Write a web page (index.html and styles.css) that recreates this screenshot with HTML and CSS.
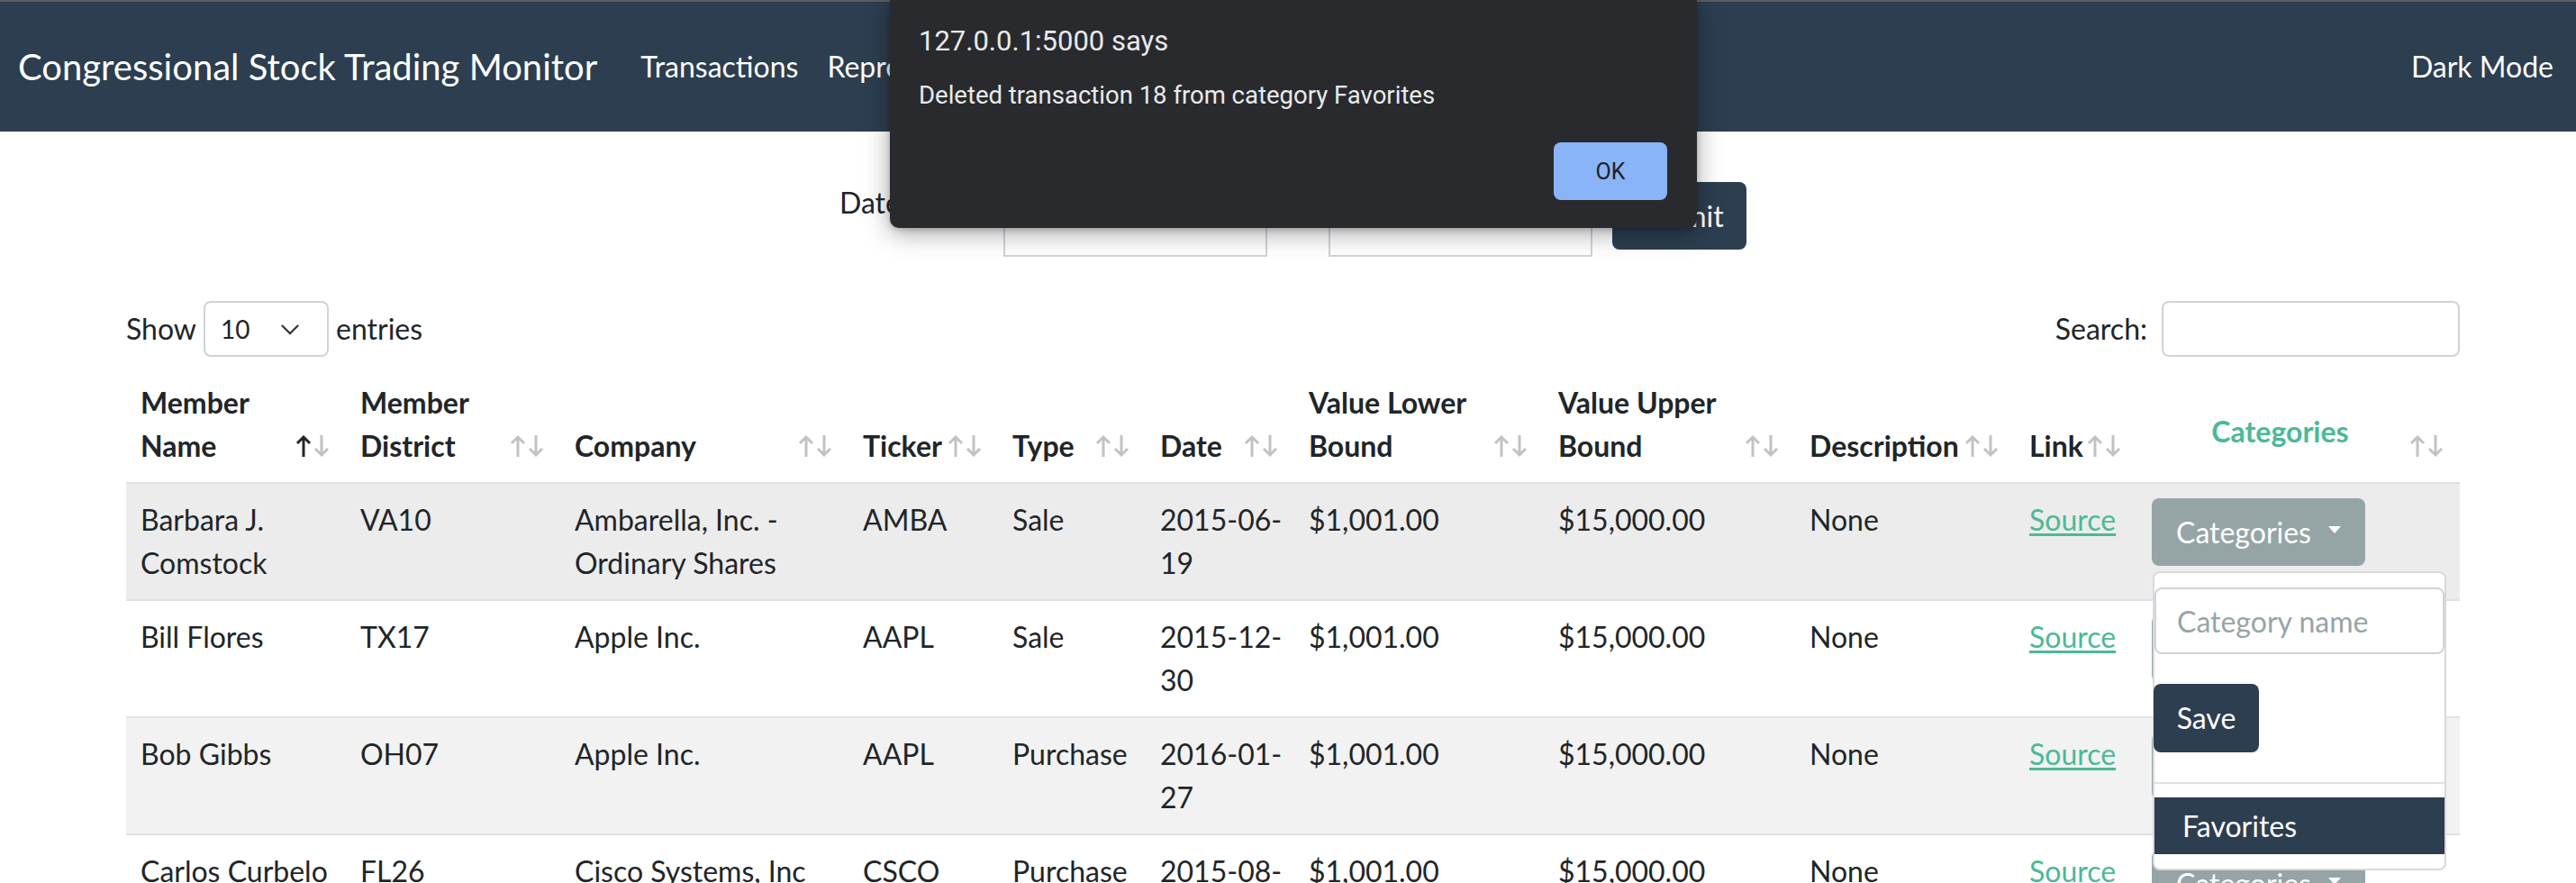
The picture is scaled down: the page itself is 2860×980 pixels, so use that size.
FILE: index.html
```html
<!DOCTYPE html>
<html lang="en">
<head>
<meta charset="utf-8">
<title>Congressional Stock Trading Monitor</title>
<link rel="stylesheet" href="styles.css">
</head>
<body>
<div class="topline"></div>
<nav class="navbar">
  <a class="brand" href="#">Congressional Stock Trading Monitor</a>
  <ul class="nav">
    <li><a href="#">Transactions</a></li>
    <li><a href="#">Representatives</a></li>
    <li><a href="#">Categories</a></li>
  </ul>
  <a class="nav-right" href="#">Dark Mode</a>
</nav>

<main class="container">
  <form class="date-form">
    <label class="lbl-from">Date from:</label>
    <input class="form-control" type="text">
    <label class="lbl-to">to:</label>
    <input class="form-control" type="text">
    <button type="button" class="btn btn-primary btn-submit">Submit</button>
  </form>

  <div class="dt-top">
    <label class="dt-length">Show
      <span class="dt-select">10
        <svg class="chev" viewBox="0 0 24 14" width="22" height="13"><path d="M2 2l10 10L22 2"/></svg>
      </span>
      entries</label>
    <label class="dt-search">Search: <input class="search-input" type="search"></label>
  </div>

  <table class="dt">
    <colgroup>
      <col class="w1"><col class="w2"><col class="w3"><col class="w4"><col class="w5"><col class="w6"><col class="w7"><col class="w8"><col class="w9"><col class="w10"><col class="w11">
    </colgroup>
    <thead>
      <tr>
        <th><div class="th-in"><span class="th-lbl">Member Name</span><span class="sort asc"><svg viewBox="0 0 40 26" width="40" height="26"><path class="up" d="M10 25V3M3 10l7-7 7 7"/><path class="dn" d="M30 1v22M23 16l7 7 7-7"/></svg></span></div></th>
        <th><div class="th-in"><span class="th-lbl">Member District</span><span class="sort"><svg viewBox="0 0 40 26" width="40" height="26"><path class="up" d="M10 25V3M3 10l7-7 7 7"/><path class="dn" d="M30 1v22M23 16l7 7 7-7"/></svg></span></div></th>
        <th><div class="th-in"><span class="th-lbl">Company</span><span class="sort"><svg viewBox="0 0 40 26" width="40" height="26"><path class="up" d="M10 25V3M3 10l7-7 7 7"/><path class="dn" d="M30 1v22M23 16l7 7 7-7"/></svg></span></div></th>
        <th><div class="th-in"><span class="th-lbl">Ticker</span><span class="sort"><svg viewBox="0 0 40 26" width="40" height="26"><path class="up" d="M10 25V3M3 10l7-7 7 7"/><path class="dn" d="M30 1v22M23 16l7 7 7-7"/></svg></span></div></th>
        <th><div class="th-in"><span class="th-lbl">Type</span><span class="sort"><svg viewBox="0 0 40 26" width="40" height="26"><path class="up" d="M10 25V3M3 10l7-7 7 7"/><path class="dn" d="M30 1v22M23 16l7 7 7-7"/></svg></span></div></th>
        <th><div class="th-in"><span class="th-lbl">Date</span><span class="sort"><svg viewBox="0 0 40 26" width="40" height="26"><path class="up" d="M10 25V3M3 10l7-7 7 7"/><path class="dn" d="M30 1v22M23 16l7 7 7-7"/></svg></span></div></th>
        <th><div class="th-in"><span class="th-lbl">Value Lower Bound</span><span class="sort"><svg viewBox="0 0 40 26" width="40" height="26"><path class="up" d="M10 25V3M3 10l7-7 7 7"/><path class="dn" d="M30 1v22M23 16l7 7 7-7"/></svg></span></div></th>
        <th><div class="th-in"><span class="th-lbl">Value Upper Bound</span><span class="sort"><svg viewBox="0 0 40 26" width="40" height="26"><path class="up" d="M10 25V3M3 10l7-7 7 7"/><path class="dn" d="M30 1v22M23 16l7 7 7-7"/></svg></span></div></th>
        <th><div class="th-in"><span class="th-lbl">Description</span><span class="sort"><svg viewBox="0 0 40 26" width="40" height="26"><path class="up" d="M10 25V3M3 10l7-7 7 7"/><path class="dn" d="M30 1v22M23 16l7 7 7-7"/></svg></span></div></th>
        <th><div class="th-in"><span class="th-lbl">Link</span><span class="sort"><svg viewBox="0 0 40 26" width="40" height="26"><path class="up" d="M10 25V3M3 10l7-7 7 7"/><path class="dn" d="M30 1v22M23 16l7 7 7-7"/></svg></span></div></th>
        <th><div class="th-in th-cat"><span class="th-lbl cat-lbl">Categories</span><span class="sort"><svg viewBox="0 0 40 26" width="40" height="26"><path class="up" d="M10 25V3M3 10l7-7 7 7"/><path class="dn" d="M30 1v22M23 16l7 7 7-7"/></svg></span></div></th>
      </tr>
    </thead>
    <tbody>
      <tr class="hover">
        <td>Barbara J. Comstock</td><td>VA10</td><td>Ambarella, Inc. - Ordinary Shares</td><td>AMBA</td><td>Sale</td><td><span class="nw">2015-06-</span><wbr><span class="nw">19</span></td><td>$1,001.00</td><td>$15,000.00</td><td>None</td><td><a class="link" href="#">Source</a></td>
        <td>
          <div class="dd">
            <button type="button" class="btn btn-cat">Categories<span class="caret"></span></button>
            <div class="menu">
              <form class="cat-form">
                <input class="cat-input" type="text" placeholder="Category name">
                <button type="button" class="btn btn-primary btn-save">Save</button>
              </form>
              <div class="divider"></div>
              <a class="menu-item active" href="#">Favorites</a>
            </div>
          </div>
        </td>
      </tr>
      <tr>
        <td>Bill Flores</td><td>TX17</td><td>Apple Inc.</td><td>AAPL</td><td>Sale</td><td><span class="nw">2015-12-</span><wbr><span class="nw">30</span></td><td>$1,001.00</td><td>$15,000.00</td><td>None</td><td><a class="link" href="#">Source</a></td>
        <td><div class="dd"><button type="button" class="btn btn-cat">Categories<span class="caret"></span></button></div></td>
      </tr>
      <tr>
        <td>Bob Gibbs</td><td>OH07</td><td>Apple Inc.</td><td>AAPL</td><td>Purchase</td><td><span class="nw">2016-01-</span><wbr><span class="nw">27</span></td><td>$1,001.00</td><td>$15,000.00</td><td>None</td><td><a class="link" href="#">Source</a></td>
        <td><div class="dd"><button type="button" class="btn btn-cat">Categories<span class="caret"></span></button></div></td>
      </tr>
      <tr>
        <td>Carlos Curbelo</td><td>FL26</td><td>Cisco Systems, Inc</td><td>CSCO</td><td>Purchase</td><td><span class="nw">2015-08-</span><wbr><span class="nw">20</span></td><td>$1,001.00</td><td>$15,000.00</td><td>None</td><td><a class="link" href="#">Source</a></td>
        <td><div class="dd"><button type="button" class="btn btn-cat">Categories<span class="caret"></span></button></div></td>
      </tr>
    </tbody>
  </table>
</main>

<div class="dialog" role="alertdialog">
  <div class="dlg-title">127.0.0.1:5000 says</div>
  <div class="dlg-msg">Deleted transaction 18 from category Favorites</div>
  <div class="dlg-actions"><button type="button" class="dlg-ok">OK</button></div>
</div>
</body>
</html>
```

FILE: styles.css
```css
* { box-sizing: border-box; }

html, body { margin: 0; padding: 0; }

body {
  position: relative;
  width: 2860px;
  height: 980px;
  overflow: hidden;
  background: #fff;
  color: #212529;
  font-family: Lato, "Liberation Sans", sans-serif;
  font-size: 32px;
  line-height: 48px;
}

a { text-decoration: none; color: inherit; }

.nw { white-space: nowrap; }

.topline { height: 2px; background: #5c5d60; }

/* navbar */
.navbar {
  height: 144px;
  background: #2c3e50;
  color: #fff;
  display: flex;
  align-items: center;
  padding: 0 25px 0 20px;
}
.brand { font-size: 40px; line-height: 48px; margin-right: 32px; white-space: nowrap; }
.nav { display: flex; list-style: none; margin: 0; padding: 0; flex: 1; }
.nav li a { display: block; padding: 0 16px; white-space: nowrap; }
.nav-right { display: block; }

/* main */
.container { width: 2591px; margin-left: 140px; }

.date-form {
  display: flex;
  justify-content: center;
  align-items: flex-start;
  padding-top: 55px;
  height: 139px;
}
.lbl-from { width: 182px; }
.lbl-to { width: 68px; text-align: center; margin-top: 0; }
.form-control {
  width: 293px;
  height: 76px;
  margin-top: 8px;
  border: 2px solid #ced4da;
  border-radius: 0;
  font: inherit;
  padding: 0 22px;
}
.btn {
  font: inherit;
  border: 0;
  border-radius: 8px;
  color: #fff;
  cursor: pointer;
}
.btn-primary { background: #2c3e50; }
.btn-submit { margin-left: 22px; margin-top: 1px; width: 149px; height: 75px; padding: 0; }

/* datatable top */
.dt-top {
  display: flex;
  justify-content: space-between;
  align-items: center;
  margin-top: 49px;
  height: 62px;
}
.dt-length, .dt-search { display: flex; align-items: center; }
.dt-select {
  display: flex;
  align-items: center;
  justify-content: space-between;
  width: 139px;
  height: 62px;
  margin: 0 8px;
  padding: 0 30px 0 17px;
  border: 2px solid #ced4da;
  border-radius: 8px;
  font-size: 28px;
}
.chev { fill: none; stroke: #343a40; stroke-width: 2.4; }
.search-input {
  width: 331px;
  height: 62px;
  margin-left: 16px;
  border: 2px solid #ced4da;
  border-radius: 8px;
  font: inherit;
}

/* table */
.dt {
  margin-top: 11px;
  width: 2591px;
  table-layout: fixed;
  border-collapse: collapse;
}
.w1 { width: 244px; } .w2 { width: 238px; } .w3 { width: 320px; } .w4 { width: 166px; }
.w5 { width: 164px; } .w6 { width: 165px; } .w7 { width: 277px; } .w8 { width: 279px; }
.w9 { width: 244px; } .w10 { width: 136px; } .w11 { width: 358px; }

.dt th, .dt td {
  padding: 16px;
  border-bottom: 2px solid #dee2e6;
  text-align: left;
}
.dt th { vertical-align: bottom; font-weight: 700; }
.dt td { vertical-align: top; }

.th-in { display: flex; align-items: flex-end; }
.th-lbl { flex: 0 1 auto; min-width: 0; }
.sort { margin-left: auto; margin-right: 1px; margin-bottom: 11px; flex: none; display: flex; }
.sort svg { display: block; }
.sort path { fill: none; stroke: #c2c2c2; stroke-width: 3; stroke-linecap: butt; }
.sort.asc .up { stroke: #212529; }

.th-cat { height: 96px; }
.cat-lbl { flex: 1; text-align: center; color: #4bb996; margin-bottom: 16px; }

.dt tbody tr:nth-child(odd) td { background: #f2f2f2; }
.dt tbody tr.hover td { background: #ececec; }

.link { color: #4bb996; text-decoration: underline; text-underline-offset: 3px; }

/* categories dropdown */
.dd { position: relative; display: inline-block; }
.btn-cat {
  display: flex;
  align-items: center;
  height: 75px;
  padding: 0 27px;
  background: #95a5a6;
}
.caret {
  margin-left: 19px;
  width: 0; height: 0;
  border-top: 8px solid #fff;
  border-left: 7.5px solid transparent;
  border-right: 7.5px solid transparent;
  margin-top: -6px;
}
.menu {
  position: absolute;
  top: calc(100% + 6px);
  left: 1px;
  z-index: 5;
  width: 326px;
  padding: 16px 0;
  background: #fff;
  border: 2px solid rgba(0, 0, 0, 0.15);
  border-radius: 8px;
}
.cat-form { display: flex; flex-direction: column; align-items: flex-start; }
.cat-input {
  width: 100%;
  height: 74px;
  padding: 0 23px;
  border: 2px solid #ced4da;
  border-radius: 8px;
  font: inherit;
  color: #212529;
}
.cat-input::placeholder { color: #95a5a6; }
.btn-save { margin-top: 33px; margin-left: -1px; width: 117px; height: 76px; padding: 0; }
.divider { height: 2px; background: #dee2e6; margin: 33px 0 15px; }
.menu-item { display: block; padding: 8px 31px; height: 63px; line-height: 47px; }
.menu-item.active { background: #2c3e50; color: #fff; }

/* browser alert dialog */
.dialog {
  position: absolute;
  left: 988px;
  top: 0;
  z-index: 10;
  width: 896px;
  height: 253px;
  padding: 28px 33px 31px 32px;
  background: #292a2d;
  border-radius: 0 0 10px 10px;
  box-shadow: 0 6px 28px rgba(0, 0, 0, 0.35), 0 2px 6px rgba(0, 0, 0, 0.2);
  color: #e8eaed;
  font-family: Roboto, "Liberation Sans", sans-serif;
}
.dlg-title { font-size: 31px; line-height: 36px; }
.dlg-msg { margin-top: 26px; font-size: 27.5px; line-height: 32px; }
.dlg-actions { display: flex; justify-content: flex-end; margin-top: 36px; }
.dlg-ok {
  width: 126px;
  height: 64px;
  border: 0;
  border-radius: 8px;
  background: #8ab4f8;
  color: #202124;
  font-family: Roboto, "Liberation Sans", sans-serif;
  font-size: 25px;
  font-weight: 400;
}
```
